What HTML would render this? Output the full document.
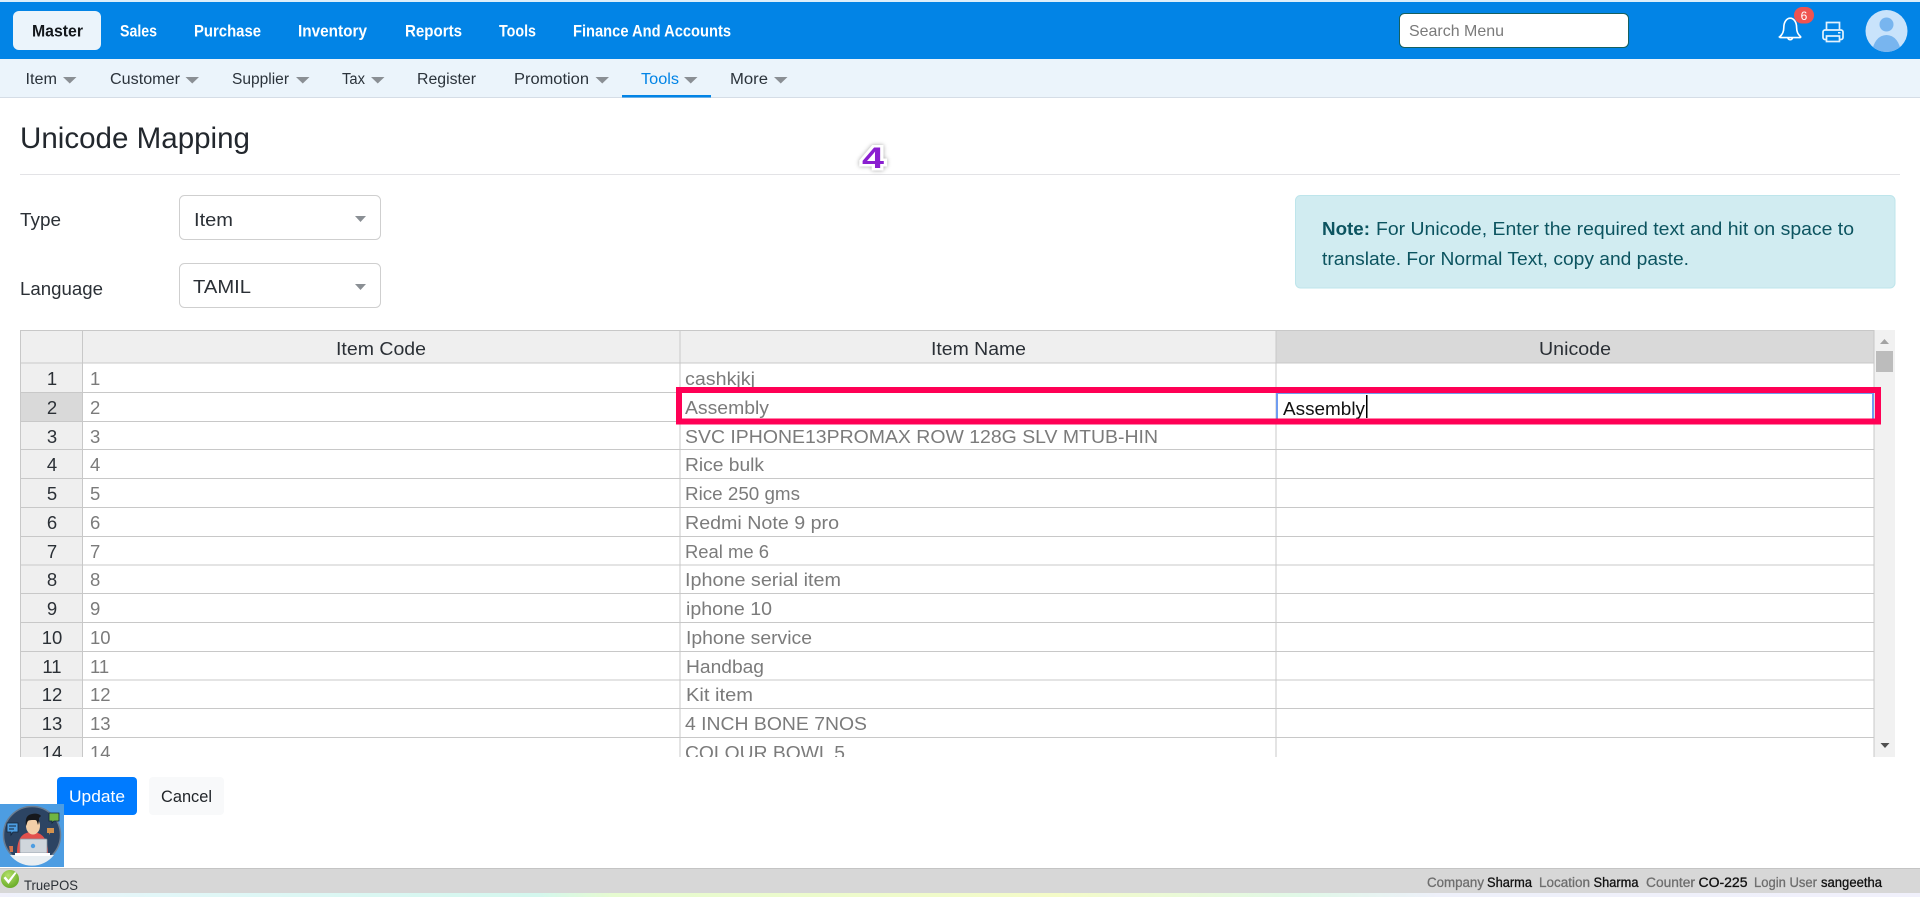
<!DOCTYPE html>
<html lang="en">
<head>
<meta charset="utf-8">
<title>Unicode Mapping</title>
<style>
html,body{margin:0;padding:0;width:1920px;height:897px;overflow:hidden;background:#fff}
svg{display:block;font-family:"Liberation Sans",Arial,sans-serif}
text{white-space:pre}
.n{font-size:16.5px;font-weight:700;fill:#fff}
.s{font-size:15.5px;fill:#2b333b}
.c{fill:#8a8f94}
.lb{font-size:18px;fill:#2b3036}
.h{font-size:18px;fill:#2b3036}
.r{font-size:18.5px;fill:#2b3036;text-anchor:middle}
.g{font-size:18.5px;fill:#7b7b7b}
.l{font-size:13.5px;fill:#6e6e6e;stroke:#6e6e6e;stroke-width:.3px}
.v{font-size:13.5px;fill:#111;stroke:#111;stroke-width:.3px}
.note{font-size:18px;fill:#0c5460}
</style>
</head>
<body>
<svg xmlns="http://www.w3.org/2000/svg" width="1920" height="897" viewBox="0 0 1920 897">
<defs>
<linearGradient id="strip" x1="0" x2="1" y1="0" y2="0">
<stop offset="0" stop-color="#f0f0fb"/><stop offset=".08" stop-color="#e2f7f8"/><stop offset=".28" stop-color="#d4f7ee"/><stop offset=".32" stop-color="#e6fbd0"/><stop offset=".55" stop-color="#f4fbc8"/><stop offset=".68" stop-color="#e0f8e8"/><stop offset=".75" stop-color="#eef0fa"/><stop offset="1" stop-color="#f0f0fb"/>
</linearGradient>
<radialGradient id="chk" cx=".4" cy=".3" r=".8"><stop offset="0" stop-color="#b4e06a"/><stop offset="1" stop-color="#5fa51f"/></radialGradient>
<clipPath id="av"><circle cx="1886.5" cy="31" r="21"/></clipPath>
<clipPath id="tb"><rect x="0" y="330" width="1920" height="427"/></clipPath>
</defs>

<rect width="1920" height="897" fill="#fff"/>
<!-- top nav -->
<rect y="0" width="1920" height="2" fill="#dceefa"/>
<rect y="2" width="1920" height="57" fill="#0284e6"/>
<rect x="13" y="11" width="88" height="39" rx="6" fill="#ebf4fb"/>
<text x="32" y="36.500" class="n" textLength="51" lengthAdjust="spacingAndGlyphs" style="fill:#14181c">Master</text>
<text x="120" y="36.500" class="n" textLength="37" lengthAdjust="spacingAndGlyphs">Sales</text>
<text x="194" y="36.500" class="n" textLength="67" lengthAdjust="spacingAndGlyphs">Purchase</text>
<text x="298" y="36.500" class="n" textLength="69" lengthAdjust="spacingAndGlyphs">Inventory</text>
<text x="405" y="36.500" class="n" textLength="57" lengthAdjust="spacingAndGlyphs">Reports</text>
<text x="499" y="36.500" class="n" textLength="37" lengthAdjust="spacingAndGlyphs">Tools</text>
<text x="573" y="36.500" class="n" textLength="158" lengthAdjust="spacingAndGlyphs">Finance And Accounts</text>

<!-- search -->
<rect x="1399.500" y="13.500" width="229" height="34" rx="5" fill="#fff" stroke="#17605f" stroke-width="1"/>
<text x="1409" y="36" font-size="16" fill="#7a7a7a" textLength="95" lengthAdjust="spacingAndGlyphs">Search Menu</text>

<!-- bell -->
<path d="M1780 36.500c2.600-2.200 3.800-4.500 3.800-9 0-5.600 2.900-9.300 6.400-9.300s6.400 3.700 6.400 9.300c0 4.500 1.200 6.800 3.800 9 .6.500.2 1.100-.5 1.100h-19.400c-.7 0-1.100-.6-.5-1.100z" fill="none" stroke="#fff" stroke-width="1.600"/>
<path d="M1787.800 37.800a2.500 2.700 0 0 0 4.800 0" fill="none" stroke="#fff" stroke-width="1.600"/>
<rect x="1794" y="7" width="20" height="16.500" rx="8.200" fill="#ef5350"/>
<text x="1804" y="20" font-size="12" fill="#fff" text-anchor="middle">6</text>
<!-- printer -->
<g fill="none" stroke="#e4f2fd" stroke-width="1.700">
<path d="M1826.500 30v-7.500h13V30"/>
<rect x="1823" y="30" width="20" height="9.500" rx="2"/>
<rect x="1826.500" y="36" width="13" height="5.500" fill="#0284e6"/>
</g>
<rect x="1838" y="32" width="2.500" height="1.500" fill="#e4f2fd"/>
<!-- user avatar -->
<circle cx="1886.500" cy="31" r="21" fill="#c9e3fb"/>
<g clip-path="url(#av)"><circle cx="1886.500" cy="24.500" r="7" fill="#78b5ef"/><ellipse cx="1886.500" cy="52" rx="14" ry="17" fill="#78b5ef"/></g>

<!-- sub nav -->
<rect y="59" width="1920" height="38" fill="#ebf4fb"/>
<rect y="97" width="1920" height="1" fill="#d5dde6"/>
<g>
<text x="25.500" y="84" class="s" textLength="31.500" lengthAdjust="spacingAndGlyphs">Item</text>
<path d="M63 77h13.500l-6.750 6.500z" class="c"/>
<text x="110" y="84" class="s" textLength="70" lengthAdjust="spacingAndGlyphs">Customer</text>
<path d="M185.500 77H199l-6.750 6.500z" class="c"/>
<text x="232" y="84" class="s" textLength="57" lengthAdjust="spacingAndGlyphs">Supplier</text>
<path d="M296 77h13.500l-6.750 6.500z" class="c"/>
<text x="342" y="84" class="s" textLength="23" lengthAdjust="spacingAndGlyphs">Tax</text>
<path d="M371 77h13.500l-6.750 6.500z" class="c"/>
<text x="417" y="84" class="s" textLength="59" lengthAdjust="spacingAndGlyphs">Register</text>
<text x="514" y="84" class="s" textLength="75" lengthAdjust="spacingAndGlyphs">Promotion</text>
<path d="M595.500 77H609l-6.750 6.500z" class="c"/>
<text x="641" y="84" class="s" textLength="38" lengthAdjust="spacingAndGlyphs" style="fill:#0284e6">Tools</text>
<path d="M684 77h13.500l-6.750 6.500z" class="c"/>
<text x="730" y="84" class="s" textLength="38" lengthAdjust="spacingAndGlyphs">More</text>
<path d="M774 77h13.500l-6.750 6.500z" class="c"/>
</g>
<rect x="622" y="95" width="89" height="2.500" fill="#0284e6"/>

<!-- heading -->
<text x="20" y="148" font-size="30" fill="#22272d" textLength="230" lengthAdjust="spacingAndGlyphs">Unicode Mapping</text>
<rect x="20" y="174" width="1880" height="1" fill="#e3e3e6"/>

<!-- the 4 marker -->
<text x="862" y="168" font-size="30" font-weight="700" fill="#8a1fd0" textLength="22" lengthAdjust="spacingAndGlyphs" stroke="#fff" stroke-width="5" paint-order="stroke" style="filter:drop-shadow(0 0 2px rgba(0,0,0,.35))">4</text>

<!-- form -->
<text x="20" y="226" class="lb" textLength="41" lengthAdjust="spacingAndGlyphs">Type</text>
<rect x="179.500" y="195.500" width="201" height="44" rx="5" fill="#fff" stroke="#cfcfcf"/>
<text x="194" y="226" class="lb" textLength="39" lengthAdjust="spacingAndGlyphs">Item</text>
<path d="M355 216h11l-5.500 6z" fill="#8a8f94"/>
<text x="20" y="295" class="lb" textLength="83" lengthAdjust="spacingAndGlyphs">Language</text>
<rect x="179.500" y="263.500" width="201" height="44" rx="5" fill="#fff" stroke="#cfcfcf"/>
<text x="193" y="293" class="lb" textLength="58" lengthAdjust="spacingAndGlyphs">TAMIL</text>
<path d="M355 284h11l-5.500 6z" fill="#8a8f94"/>

<!-- note -->
<rect x="1295.500" y="195.500" width="599.500" height="92.500" rx="5" fill="#d1ecf1" stroke="#bee5eb"/>
<text x="1322" y="235" class="note" font-weight="700" textLength="48" lengthAdjust="spacingAndGlyphs">Note:</text>
<text x="1376" y="235" class="note" textLength="478" lengthAdjust="spacingAndGlyphs">For Unicode, Enter the required text and hit on space to</text>
<text x="1322" y="265" class="note" textLength="367" lengthAdjust="spacingAndGlyphs">translate. For Normal Text, copy and paste.</text>

<!-- table -->
<g clip-path="url(#tb)">
<rect x="20" y="330" width="1854" height="33" fill="#efefef"/>
<rect x="1276" y="330" width="598" height="33" fill="#d9d9d9"/>
<rect x="20" y="363" width="62" height="394" fill="#efefef"/>
<rect x="20" y="392" width="62" height="29" fill="#d9d9d9"/>
<g fill="#c8c8c8">
<rect x="20" y="330" width="1854" height="1"/>
<rect x="20" y="362.500" width="1854" height="1"/>
<rect x="20" y="392" width="1854" height="1"/>
<rect x="20" y="421" width="1854" height="1"/>
<rect x="20" y="449" width="1854" height="1"/>
<rect x="20" y="478" width="1854" height="1"/>
<rect x="20" y="507" width="1854" height="1"/>
<rect x="20" y="536" width="1854" height="1"/>
<rect x="20" y="564.500" width="1854" height="1"/>
<rect x="20" y="593" width="1854" height="1"/>
<rect x="20" y="622" width="1854" height="1"/>
<rect x="20" y="651" width="1854" height="1"/>
<rect x="20" y="679.500" width="1854" height="1"/>
<rect x="20" y="708" width="1854" height="1"/>
<rect x="20" y="737" width="1854" height="1"/>
<rect x="20" y="330" width="1" height="427"/>
<rect x="82" y="330" width="1" height="427"/>
<rect x="679.500" y="330" width="1" height="427"/>
<rect x="1275.500" y="330" width="1" height="427"/>
<rect x="1873.500" y="330" width="1" height="427"/>
</g>

<text x="336" y="355" class="h" textLength="90" lengthAdjust="spacingAndGlyphs">Item Code</text>
<text x="931" y="355" class="h" textLength="95" lengthAdjust="spacingAndGlyphs">Item Name</text>
<text x="1539" y="355" class="h" textLength="72" lengthAdjust="spacingAndGlyphs">Unicode</text>

<text x="52" y="385" class="r">1</text><text x="90" y="385" class="g">1</text>
<text x="52" y="414" class="r">2</text><text x="90" y="414" class="g">2</text>
<text x="52" y="443" class="r">3</text><text x="90" y="443" class="g">3</text>
<text x="52" y="471" class="r">4</text><text x="90" y="471" class="g">4</text>
<text x="52" y="500" class="r">5</text><text x="90" y="500" class="g">5</text>
<text x="52" y="529" class="r">6</text><text x="90" y="529" class="g">6</text>
<text x="52" y="558" class="r">7</text><text x="90" y="558" class="g">7</text>
<text x="52" y="586" class="r">8</text><text x="90" y="586" class="g">8</text>
<text x="52" y="615" class="r">9</text><text x="90" y="615" class="g">9</text>
<text x="52" y="644" class="r">10</text><text x="90" y="644" class="g">10</text>
<text x="52" y="673" class="r">11</text><text x="90" y="673" class="g">11</text>
<text x="52" y="701" class="r">12</text><text x="90" y="701" class="g">12</text>
<text x="52" y="730" class="r">13</text><text x="90" y="730" class="g">13</text>
<text x="52" y="759" class="r">14</text><text x="90" y="759" class="g">14</text>

<text x="685" y="385" class="g" textLength="70" lengthAdjust="spacingAndGlyphs">cashkjkj</text>
<text x="685" y="414" class="g" textLength="84" lengthAdjust="spacingAndGlyphs">Assembly</text>
<text x="685" y="443" class="g" textLength="473" lengthAdjust="spacingAndGlyphs">SVC IPHONE13PROMAX ROW 128G SLV MTUB-HIN</text>
<text x="685" y="471" class="g" textLength="79" lengthAdjust="spacingAndGlyphs">Rice bulk</text>
<text x="685" y="500" class="g" textLength="115" lengthAdjust="spacingAndGlyphs">Rice 250 gms</text>
<text x="685" y="529" class="g" textLength="154" lengthAdjust="spacingAndGlyphs">Redmi Note 9 pro</text>
<text x="685" y="558" class="g" textLength="84" lengthAdjust="spacingAndGlyphs">Real me 6</text>
<text x="685" y="586" class="g" textLength="156" lengthAdjust="spacingAndGlyphs">Iphone serial item</text>
<text x="686" y="615" class="g" textLength="86" lengthAdjust="spacingAndGlyphs">iphone 10</text>
<text x="686" y="644" class="g" textLength="126" lengthAdjust="spacingAndGlyphs">Iphone service</text>
<text x="686" y="673" class="g" textLength="78" lengthAdjust="spacingAndGlyphs">Handbag</text>
<text x="686" y="701" class="g" textLength="67" lengthAdjust="spacingAndGlyphs">Kit item</text>
<text x="685" y="730" class="g" textLength="182" lengthAdjust="spacingAndGlyphs">4 INCH BONE 7NOS</text>
<text x="685" y="759" class="g" textLength="160" lengthAdjust="spacingAndGlyphs">COLOUR BOWL 5</text>

<!-- scrollbar -->
<rect x="1874.500" y="330" width="20.500" height="427" fill="#f1f1f1"/>
<path d="M1880 344h9l-4.500-5z" fill="#a3a3a3"/>
<rect x="1876" y="351" width="17" height="21" fill="#bcbcbc"/>
<path d="M1880.500 743h9l-4.500 5z" fill="#505050"/>
</g>

<!-- active cell -->
<rect x="1277" y="393" width="596" height="27" fill="#fff" stroke="#6f9cf0" stroke-width="2"/>
<text x="1283" y="415" font-size="18.500" fill="#111" textLength="82" lengthAdjust="spacingAndGlyphs">Assembly</text>
<rect x="1366" y="395" width="1.500" height="23" fill="#000"/>
<!-- highlight -->
<rect x="679" y="390" width="1199" height="31.500" fill="none" stroke="#ff0055" stroke-width="6"/>

<!-- buttons -->
<rect x="57" y="777" width="80" height="38" rx="4" fill="#007bff"/>
<text x="69" y="802" font-size="17" fill="#fff" textLength="56" lengthAdjust="spacingAndGlyphs">Update</text>
<rect x="149" y="777" width="75" height="38" rx="4" fill="#f8f9fa"/>
<text x="161" y="802" font-size="17" fill="#212529" textLength="51" lengthAdjust="spacingAndGlyphs">Cancel</text>

<!-- help avatar -->
<rect x="0" y="804" width="64" height="63" fill="#4d9de2"/>
<circle cx="32" cy="835" r="28.500" fill="#2c4463" stroke="#6a7c90" stroke-width="1.500"/>
<path d="M10 855a28 28 0 0 0 44 0z" fill="#e8eef2"/>
<path d="M17 853c0-14 5-21 15-21s16 7 16 21z" fill="#e2504c"/>
<ellipse cx="33" cy="826" rx="7" ry="8.500" fill="#f3cfa8"/>
<path d="M26 826c-1-8 1-11 6-12 3-1 8 0 9 2l-2 2c0 2 0 4-1 7-1-3-1-5-3-5-3 0-6 0-7 1-1 1-1 3-2 5z" fill="#16181c"/>
<rect x="20" y="839" width="27" height="14" rx="1" fill="#d0d6dc" stroke="#8c96a0" stroke-width=".7"/>
<circle cx="33" cy="846" r="2.200" fill="#4d9de2"/>
<rect x="15" y="853" width="35" height="3" fill="#fff"/>
<path d="M7 823h11v9h-5l-2 3v-3H7z" fill="#4d9de2" stroke="#13253a" stroke-width=".8"/>
<path d="M9 826h7M9 829h5" stroke="#13253a" stroke-width="1"/>
<path d="M49 813h10v8h-5l-2 2v-2h-3z" fill="#6fb544" stroke="#13253a" stroke-width=".8"/>
<path d="M47 828h7v5h-4l-1 2v-2h-2z" fill="#d2924e"/>
<path d="M9 846h4v6h-3z" fill="#d2724e"/>

<!-- status bar -->
<rect y="868" width="1920" height="25" fill="#d7d7d7"/>
<rect y="868" width="1920" height="1" fill="#c4c4c4"/>
<rect y="893" width="1920" height="4" fill="url(#strip)"/>
<circle cx="10" cy="879" r="9" fill="url(#chk)"/>
<path d="M3.500 878l5 6 8-11-1.500-1-6.500 8-3-3.500z" fill="#fff"/>
<text x="24" y="890" font-size="14" fill="#2b3036" textLength="54" lengthAdjust="spacingAndGlyphs">TruePOS</text>
<text x="1427" y="887" class="l" textLength="57" lengthAdjust="spacingAndGlyphs">Company</text>
<text x="1487" y="887" class="v" textLength="45" lengthAdjust="spacingAndGlyphs">Sharma</text>
<text x="1539" y="887" class="l" textLength="51" lengthAdjust="spacingAndGlyphs">Location</text>
<text x="1593.500" y="887" class="v" textLength="45" lengthAdjust="spacingAndGlyphs">Sharma</text>
<text x="1646" y="887" class="l" textLength="49" lengthAdjust="spacingAndGlyphs">Counter</text>
<text x="1698.500" y="887" class="v" textLength="49" lengthAdjust="spacingAndGlyphs">CO-225</text>
<text x="1754" y="887" class="l" textLength="63" lengthAdjust="spacingAndGlyphs">Login User</text>
<text x="1821" y="887" class="v" textLength="61" lengthAdjust="spacingAndGlyphs">sangeetha</text>
</svg>
</body>
</html>
